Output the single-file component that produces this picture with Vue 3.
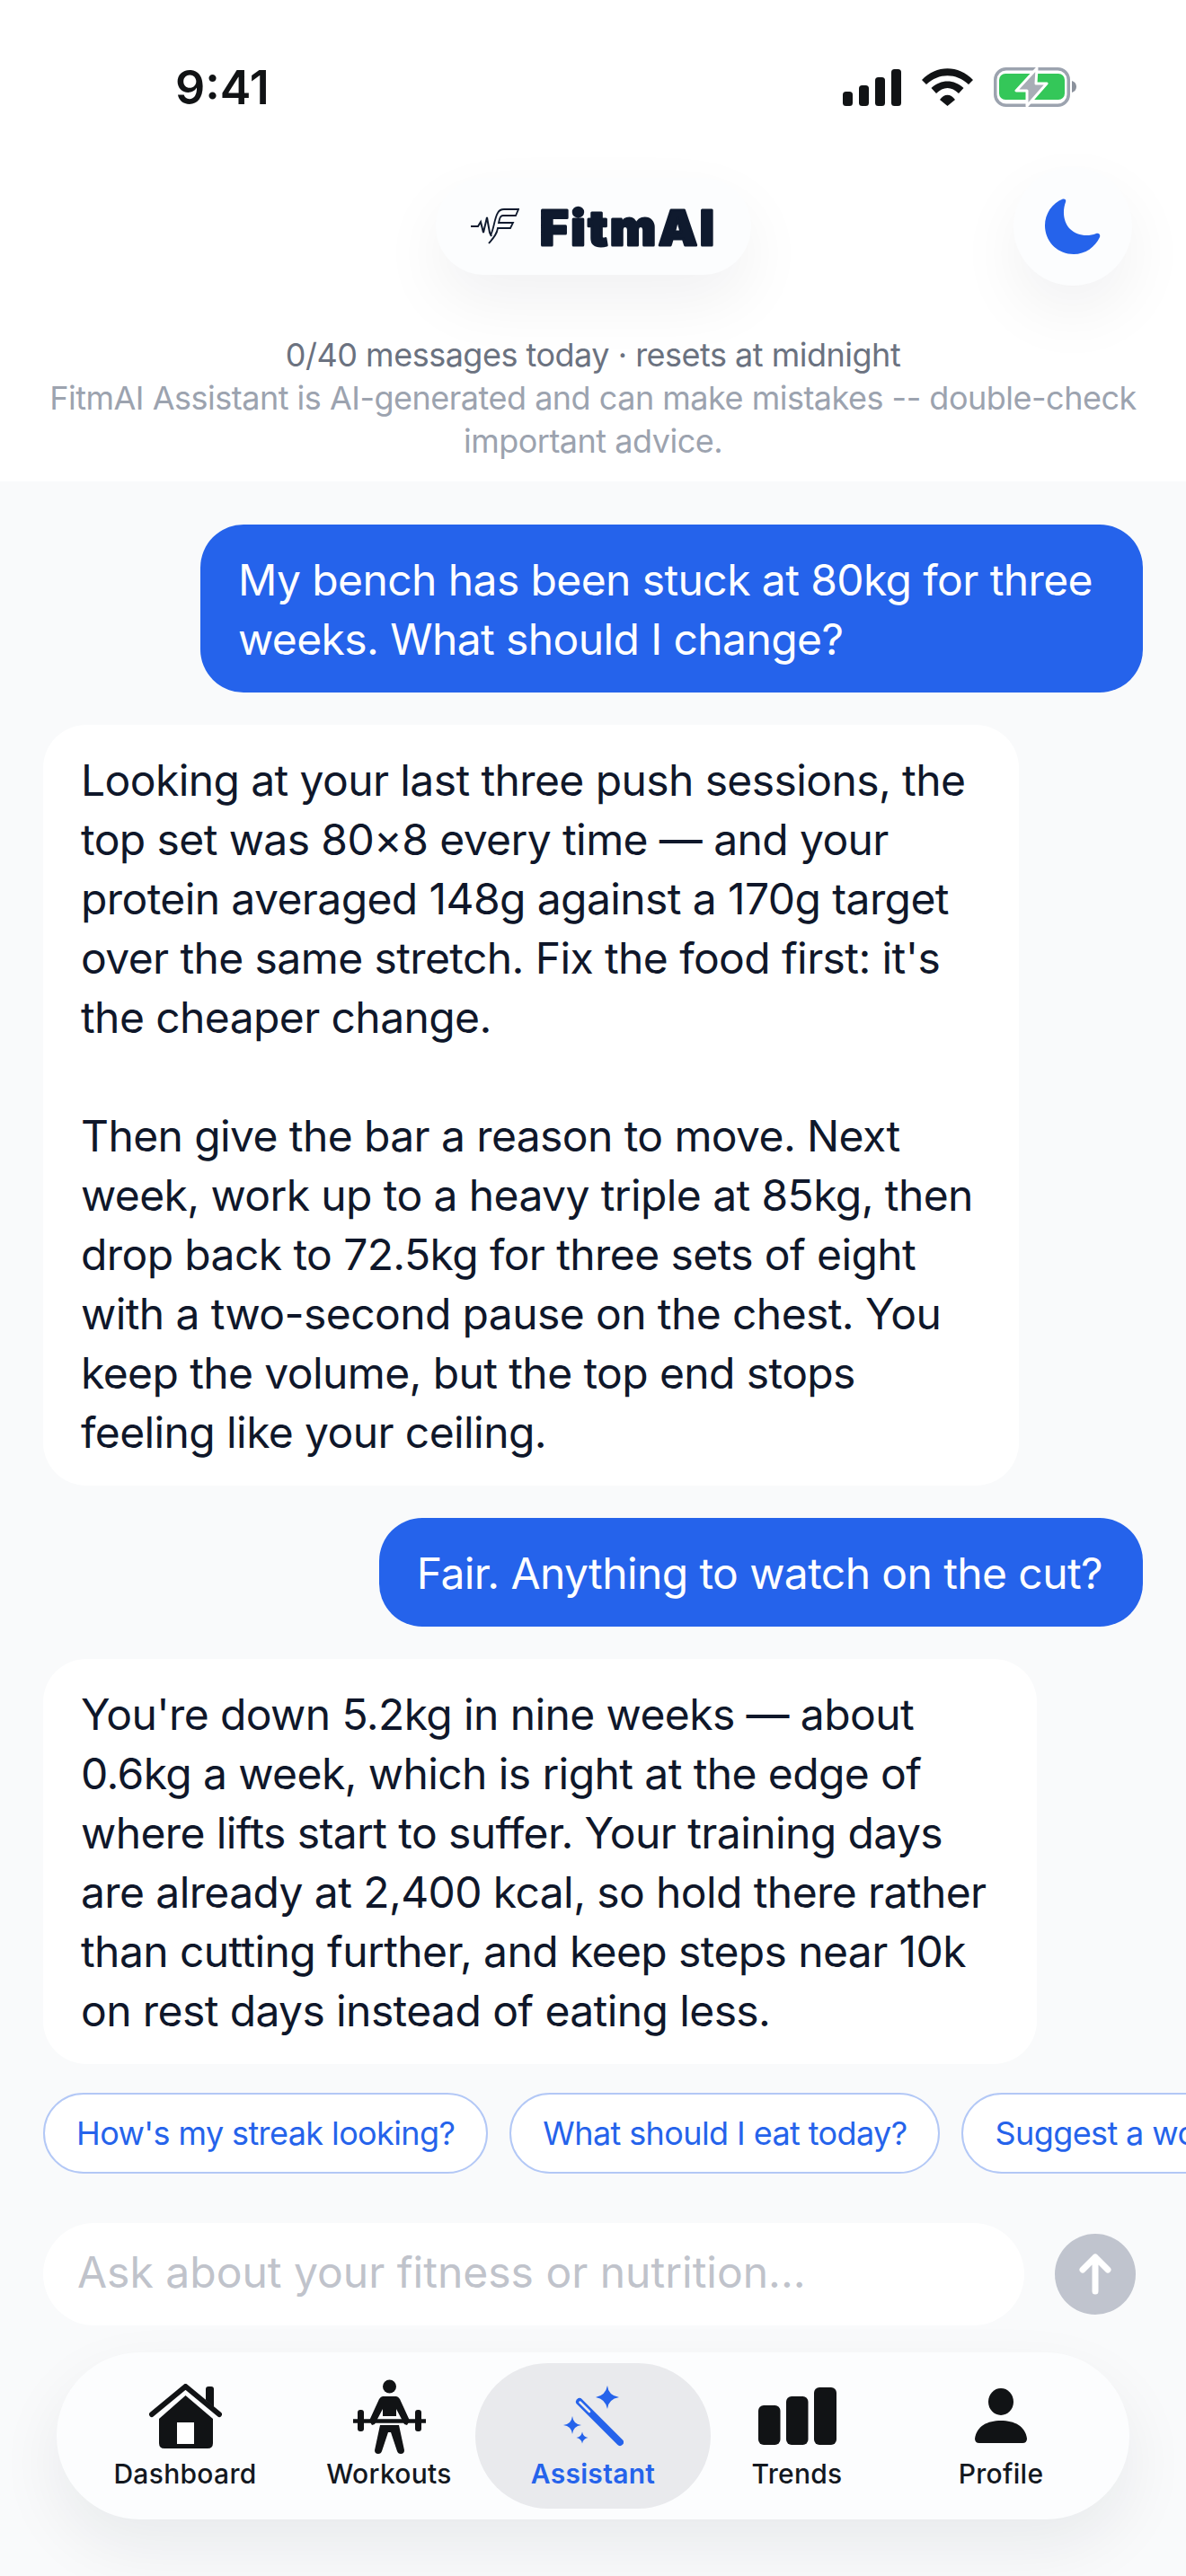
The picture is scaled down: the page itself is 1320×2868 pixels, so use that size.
<template>
  <div class="screen">
    <header class="top">
      <div class="status">
        <span class="time">9:41</span>
        <div class="status-icons">
          <svg width="65" height="41" viewBox="0 0 65 41">
            <rect x="0" y="25" width="11" height="16" rx="3.500" fill="#111315" />
            <rect x="18" y="18" width="11" height="23" rx="3.500" fill="#111315" />
            <rect x="36" y="9" width="11" height="32" rx="3.500" fill="#111315" />
            <rect x="54" y="0" width="11" height="41" rx="3.500" fill="#111315" />
          </svg>
          <svg width="57" height="42" viewBox="0 0 57 42">
            <path d="M0 13C16-4 41-4 57 13L52 18C38 5 19 5 5 18Z" fill="#111315" />
            <path d="M10.500 22C21 12 36 12 46.500 22L41 28C33 20 24 20 16 28Z" fill="#111315" />
            <path d="M20 35C25 28 32 28 37 35L28.500 42Z" fill="#111315" />
          </svg>
          <svg width="92" height="44" viewBox="0 0 92 44">
            <rect x="1.750" y="1.750" width="81.500" height="40.500" rx="12" fill="#fff" stroke="#9ca3af" stroke-width="3.500" />
            <rect x="6" y="7" width="73" height="29" rx="7" fill="#34c759" />
            <path d="M87 15c3 1 5 3 5 6.500s-2 5.500-5 6.500z" fill="#8b919c" />
            <path d="M48 1 25 26H37L37 43 59 18H47Z" fill="#a8adb6" stroke="#fff" stroke-width="3" stroke-linejoin="round" />
          </svg>
        </div>
      </div>
      <div class="brand-row">
        <div class="brand">
          <svg class="logo" width="54" height="40" viewBox="0 0 54 40" fill="none" stroke="#0f1a2e">
            <path d="M0 20H8L11 15 14 27 18 10 21 27 23 31" stroke-width="2" />
            <path d="M22 30C26 22 26 12 30 5Q32 1 37 1H53L50 8H36Q33 8 32 12L31 16H47L44 22H30C29 29 25 33 20 39" stroke-width="1.800" />
          </svg>
          <svg class="wordmark" width="206" height="76" viewBox="0 0 206 76">
            <text x="2" y="59" class="wordmark-text">FitmAI</text>
          </svg>
        </div>
        <button class="moon">
          <svg width="62" height="62" viewBox="0 0 62 62">
            <path d="M20 .5C22 0 24 1 23 4 19 15 21 27 28 34 35 41 47 43 57 39 60 38 62 40 61 43 56 54 45 62 32 62 14 62 0 48 0 30 0 17 8 5 20 .5Z" fill="#2563eb" />
          </svg>
        </button>
      </div>
      <div class="notice">
        <p class="quota">0/40 messages today · resets at midnight</p>
        <p class="disclaimer">FitmAI Assistant is AI-generated and can make mistakes -- double-check important advice.</p>
      </div>
    </header>

    <main class="chat">
      <div v-for="(m, i) in messages" :key="i" class="bubble" :class="[m.role, m.size]">{{ m.text }}</div>
    </main>

    <div class="chips">
      <button v-for="c in chips" :key="c" class="chip">{{ c }}</button>
    </div>

    <div class="composer">
      <div class="field">Ask about your fitness or nutrition...</div>
      <button class="send">
        <svg width="36" height="46" viewBox="0 0 36 46" fill="none" stroke="#fff" stroke-width="7" stroke-linecap="round" stroke-linejoin="round">
          <path d="M18 42V4M4 18 18 4 32 18" />
        </svg>
      </button>
    </div>

    <nav class="tabs">
      <div v-for="t in tabs" :key="t.label" class="tab" :class="{ active: t.label === 'Assistant' }">
        <span class="tab-icon">
          <svg v-if="t.icon === 'home'" width="81" height="72" viewBox="0 0 81 72">
            <path d="M3 34 40.500 3 78 34" fill="none" stroke="#111315" stroke-width="6" stroke-linecap="round" stroke-linejoin="round" />
            <path d="M63 6Q63 3 66 3H69Q72 3 72 6V26L63 18Z" fill="#111315" />
            <path d="M40.500 13 71 39V66Q71 72 65 72H17Q11 72 11 66V39Z" fill="#111315" />
            <rect x="31" y="43" width="19" height="24" fill="#fff" />
          </svg>
          <svg v-else-if="t.icon === 'lift'" width="81" height="83" viewBox="0 0 81 83">
            <circle cx="40.500" cy="8" r="7.500" fill="#111315" />
            <path d="M33 19H48Q50 19 52 22L63 46 60 51 57 50 48 33V41H33V33L24 50 21 51 18 46 29 22Q31 19 33 19Z" fill="#111315" />
            <path d="M0 46.500H81" stroke="#111315" stroke-width="4.500" stroke-linecap="round" />
            <rect x="5" y="34" width="7" height="24" rx="3" fill="#111315" />
            <rect x="69" y="34" width="7" height="24" rx="3" fill="#111315" />
            <path d="M30 51H51L57 79Q57 83 53 83 50 83 49 80L42 59H39L32 80Q31 83 28 83 24 83 24 79Z" fill="#111315" />
          </svg>
          <svg v-else-if="t.icon === 'wand'" width="67" height="68" viewBox="0 0 67 68">
            <path d="M18 18 63 63" stroke="#2563eb" stroke-width="8" stroke-linecap="round" />
            <path d="M18.500 18.500 29 29" stroke="#e9eaed" stroke-width="2.500" stroke-linecap="round" />
            <path d="M49 0Q50 11 62 13 50 15 49 26 47 15 36 13 47 11 49 0Z" fill="#2563eb" />
            <path d="M10 34Q11 43 20 44 11 45 10 54 9 45 0 44 9 43 10 34Z" fill="#2563eb" />
            <path d="M21 51.500Q22 57 27.500 58 22 59 21 64.500 20 59 14.500 58 20 57 21 51.500Z" fill="#2563eb" />
          </svg>
          <svg v-else-if="t.icon === 'bars'" width="87" height="64" viewBox="0 0 87 64">
            <rect x="0" y="20" width="24.500" height="44" rx="6" fill="#111315" />
            <rect x="31" y="10" width="24.500" height="54" rx="6" fill="#111315" />
            <rect x="62" y="0" width="25" height="64" rx="6" fill="#111315" />
          </svg>
          <svg v-else width="58" height="62" viewBox="0 0 58 62">
            <ellipse cx="29" cy="15" rx="14" ry="15" fill="#111315" />
            <path d="M0 56C2 42 14 36 29 36S56 42 58 56Q58 61 53 61H5Q0 61 0 56Z" fill="#111315" />
          </svg>
        </span>
        <span class="tab-label">{{ t.label }}</span>
      </div>
    </nav>
  </div>
</template>

<script setup>
const messages = [
  { role: "user", text: "My bench has been stuck at 80kg for three\nweeks. What should I change?" },
  {
    role: "bot",
    size: "snug",
    text: "Looking at your last three push sessions, the\ntop set was 80×8 every time — and your\nprotein averaged 148g against a 170g target\nover the same stretch. Fix the food first: it's\nthe cheaper change.\n\nThen give the bar a reason to move. Next\nweek, work up to a heavy triple at 85kg, then\ndrop back to 72.5kg for three sets of eight\nwith a two-second pause on the chest. You\nkeep the volume, but the top end stops\nfeeling like your ceiling.",
  },
  { role: "user", size: "short", text: "Fair. Anything to watch on the cut?" },
  {
    role: "bot",
    text: "You're down 5.2kg in nine weeks — about\n0.6kg a week, which is right at the edge of\nwhere lifts start to suffer. Your training days\nare already at 2,400 kcal, so hold there rather\nthan cutting further, and keep steps near 10k\non rest days instead of eating less.",
  },
];

const chips = ["How's my streak looking?", "What should I eat today?", "Suggest a workout"];

const tabs = [
  { label: "Dashboard", icon: "home" },
  { label: "Workouts", icon: "lift" },
  { label: "Assistant", icon: "wand" },
  { label: "Trends", icon: "bars" },
  { label: "Profile", icon: "person" },
];
</script>

<style>
html,
body {
  margin: 0;
  background: #f9fafb;
}
</style>

<style scoped>
.screen {
  width: 1320px;
  height: 2868px;
  overflow: hidden;
  display: flex;
  flex-direction: column;
  background: #f9fafb;
  font-family: Inter, "Liberation Sans", sans-serif;
  color: #0f172a;
}
button {
  border: 0;
  padding: 0;
  font-family: inherit;
}
p {
  margin: 0;
}
.top {
  height: 536px;
  flex-shrink: 0;
  background: #fff;
  box-sizing: border-box;
}
.status {
  display: flex;
  justify-content: space-between;
  align-items: center;
  height: 42px;
  padding: 76px 122px 0 195px;
}
.time {
  font-size: 52px;
  font-weight: 600;
  color: #111315;
}
.status-icons {
  display: flex;
  align-items: center;
  gap: 23px;
}
.brand-row {
  position: relative;
  display: flex;
  justify-content: center;
  margin-top: 80px;
}
.brand {
  display: flex;
  align-items: center;
  gap: 21px;
  height: 108px;
  box-sizing: border-box;
  padding: 0 31px 0 39px;
  border-radius: 54px;
  background: #fcfdfe;
  box-shadow: 0 30px 72px rgba(17, 24, 39, 0.06);
}
.wordmark-text {
  font-size: 54px;
  font-weight: 900;
  letter-spacing: 3px;
  fill: #0f1a2e;
  stroke: #0f1a2e;
  stroke-width: 3px;
  stroke-linejoin: round;
}
.moon {
  position: absolute;
  right: 60px;
  top: -12px;
  width: 132px;
  height: 132px;
  border-radius: 50%;
  background: #fcfdfe;
  box-shadow: 0 30px 72px rgba(17, 24, 39, 0.06);
  display: flex;
  align-items: center;
  justify-content: center;
}
.notice {
  margin-top: 65px;
  padding: 0 48px;
  text-align: center;
  font-size: 36px;
  letter-spacing: -0.5px;
  line-height: 48px;
}
.quota {
  color: #6b7280;
}
.disclaimer {
  color: #9ca3af;
}
.chat {
  flex: 1;
  min-height: 0;
  display: flex;
  flex-direction: column;
  gap: 36px;
  padding: 48px 48px 0;
}
.bubble {
  box-sizing: border-box;
  padding: 29px 56px 26px 42px;
  font-size: 48px;
  letter-spacing: -0.6px;
  line-height: 66px;
  white-space: pre-line;
  border-radius: 48px;
}
.bubble.user {
  align-self: flex-end;
  background: #2563eb;
  color: #fff;
}
.bubble.short {
  padding-right: 45px;
}
.bubble.bot {
  align-self: flex-start;
  background: #fff;
  color: #0f172a;
}
.bubble.snug {
  padding-right: 51px;
}
.chips {
  display: flex;
  gap: 24px;
  padding-left: 48px;
  margin-bottom: 55px;
  overflow: hidden;
}
.chip {
  flex-shrink: 0;
  height: 90px;
  padding: 0 35px;
  border-radius: 45px;
  background: #fff;
  border: 2px solid #b3c8f6;
  color: #2563eb;
  font-size: 36px;
  letter-spacing: -0.6px;
}
.composer {
  display: flex;
  align-items: center;
  gap: 34px;
  padding: 0 56px 0 48px;
}
.field {
  flex: 1;
  height: 114px;
  box-sizing: border-box;
  padding: 0 38px 6px;
  display: flex;
  align-items: center;
  border-radius: 57px;
  background: #fff;
  color: #c0c3cb;
  font-size: 48px;
}
.send {
  width: 90px;
  height: 90px;
  border-radius: 50%;
  background: #c0c4ce;
  display: flex;
  align-items: center;
  justify-content: center;
}
.tabs {
  display: grid;
  grid-template-columns: repeat(5, 227px);
  justify-content: center;
  align-items: center;
  margin: 30px 63px 63px;
  height: 186px;
  border-radius: 93px;
  background: #fcfdfe;
  box-shadow: 0 30px 72px rgba(17, 24, 39, 0.07);
}
.tab {
  height: 162px;
  border-radius: 81px;
  display: flex;
  flex-direction: column;
  align-items: center;
  padding-top: 17px;
  box-sizing: border-box;
  color: #13181f;
}
.tab.active {
  margin: 0 -17.5px;
  background: #e9eaed;
  color: #2563eb;
}
.tab-icon {
  height: 84px;
  display: flex;
  align-items: center;
}
.tab-label {
  margin-top: 4px;
  font-size: 30px;
  font-weight: 500;
  letter-spacing: 0.3px;
  line-height: 36px;
}
.tab.active .tab-label {
  font-weight: 600;
}
</style>
